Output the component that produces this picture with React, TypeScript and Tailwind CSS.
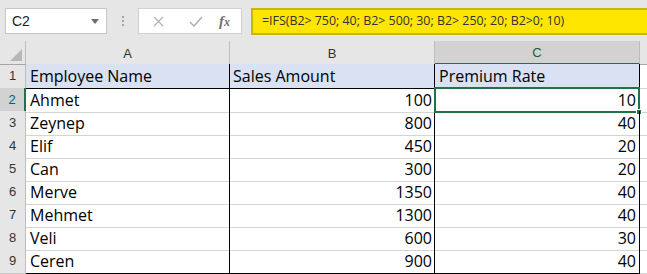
import React from 'react';

const rows: [string, number, number][] = [
    ['Ahmet', 100, 10],
    ['Zeynep', 800, 40],
    ['Elif', 450, 20],
    ['Can', 300, 20],
    ['Merve', 1350, 40],
    ['Mehmet', 1300, 40],
    ['Veli', 600, 30],
    ['Ceren', 900, 40],
];

const cellFont = { fontFamily: '"Open Sans", "Liberation Sans", sans-serif' };

const FormulaBar = () => (
    <div className="h-[41px] bg-[#e6e6e6] flex items-start pt-[8px] pl-[5px]">
        {/* Name box */}
        <div className="w-[102px] h-[26px] bg-white border border-[#c6c6c6] flex items-center justify-between pl-[6px] pr-[7px]">
            <span className="text-[14px] text-[#222]" style={{ fontFamily: '"Liberation Sans", sans-serif' }}>C2</span>
            <svg width="8" height="5" viewBox="0 0 8 5"><path d="M0 0h8L4 5z" fill="#6d6d6d" /></svg>
        </div>
        <div className="w-[31px] h-[26px] flex flex-col items-center justify-center gap-[2px]">
            <span className="w-[2px] h-[2px] bg-[#a6a6a6]"></span>
            <span className="w-[2px] h-[2px] bg-[#a6a6a6]"></span>
            <span className="w-[2px] h-[2px] bg-[#a6a6a6]"></span>
        </div>
        {/* Cancel / enter / function */}
        <div className="w-[104px] h-[26px] bg-white border border-[#d0d0d0] flex items-center">
            <svg className="ml-[14px]" width="11" height="11" viewBox="0 0 11 11">
                <path d="M1 1l9 9M10 1l-9 9" stroke="#b3b3b3" strokeWidth="1.3" />
            </svg>
            <svg className="ml-[25px]" width="14" height="11" viewBox="0 0 14 11">
                <path d="M1 6l4 4 8-9" stroke="#b3b3b3" strokeWidth="1.6" fill="none" />
            </svg>
            <span
                className="ml-[16px] text-[15px] italic text-[#707070] font-bold"
                style={{ fontFamily: '"Liberation Serif", serif' }}
            >
                f<span className="text-[12px]">x</span>
            </span>
        </div>
        {/* Formula input */}
        <div className="ml-[9px] flex-1 h-[27px] bg-[#ffe600] border-y-2 border-l-2 border-[#c9b800] flex items-center pl-[9px]">
            <span className="text-[12.4px] text-[#333]" style={{ fontFamily: '"Open Sans", sans-serif' }}>
                =IFS(B2&gt; 750; 40; B2&gt; 500; 30; B2&gt; 250; 20; B2&gt;0; 10)
            </span>
        </div>
    </div>
);

const grid = 'grid grid-cols-[26px_204px_205px_205px_1fr]';

const App = () => {
    return (
        <div className="w-[647px] h-[274px] bg-white overflow-hidden">
            <FormulaBar />

            {/* Column headers */}
            <div className={`${grid} h-[23px] bg-[#e6e6e6] text-[13px] text-[#333]`} style={{ fontFamily: '"Liberation Sans", sans-serif' }}>
                <div className="relative border-r border-[#bdbdbd] border-b border-b-[#a6a6a6]">
                    <svg className="absolute right-[3px] bottom-[3px]" width="12" height="12" viewBox="0 0 12 12">
                        <path d="M12 0v12H0z" fill="#b6b6b6" />
                    </svg>
                </div>
                <div className="border-r border-[#bdbdbd] border-b border-b-[#a6a6a6] flex items-center justify-center pt-[2px]">A</div>
                <div className="border-r border-[#bdbdbd] border-b border-b-[#a6a6a6] flex items-center justify-center pt-[2px]">B</div>
                <div className="bg-[#d2d2d2] border-r border-[#bdbdbd] border-b-2 border-b-[#217346] flex items-center justify-center text-[#1e5c3a] pt-[2px]">C</div>
                <div className="border-b border-b-[#a6a6a6]"></div>
            </div>

            {/* Header row */}
            <div className={`${grid} h-[24px] text-[16px] text-black`} style={cellFont}>
                <div className="bg-[#e6e6e6] border-r border-[#bdbdbd] border-b border-b-[#c8c8c8] flex items-center justify-center text-[13px] text-[#333]" style={{ fontFamily: '"Liberation Sans", sans-serif' }}>1</div>
                <div className="bg-[#d9e1f2] border-r border-black border-b border-b-black flex items-center pl-[4px]">Employee Name</div>
                <div className="bg-[#d9e1f2] border-r border-black border-b border-b-black flex items-center pl-[3px]">Sales Amount</div>
                <div className="bg-[#d9e1f2] border-r border-black border-b border-b-black flex items-center pl-[4px]">Premium Rate</div>
                <div className="border-b border-[#d4d4d4]"></div>
            </div>

            {/* Data rows */}
            {rows.map(([name, sales, rate], i) => {
                const selected = i === 0;
                const last = i === rows.length - 1;
                const bottom = last ? 'border-b-black' : 'border-b-[#d4d4d4]';
                return (
                    <div key={name} className={`${grid} h-[23px] text-[16px] text-black`} style={cellFont}>
                        <div
                            className={`flex items-center justify-center text-[13px] border-b border-b-[#c8c8c8] ${
                                selected
                                    ? 'bg-[#d2d2d2] text-[#1e5c3a] border-r-2 border-r-[#217346]'
                                    : 'bg-[#e6e6e6] text-[#333] border-r border-r-[#bdbdbd]'
                            }`}
                            style={{ fontFamily: '"Liberation Sans", sans-serif' }}
                        >
                            {i + 2}
                        </div>
                        <div className={`border-r border-r-black border-b ${bottom} flex items-center pl-[4px]`}>{name}</div>
                        <div className={`border-r border-r-black border-b ${bottom} flex items-center justify-end pr-[2px]`}>{sales}</div>
                        <div className={`relative border-r border-r-black border-b ${bottom} flex items-center justify-end pr-[3px]`}>
                            {rate}
                            {selected && (
                                <div className="absolute -left-[1px] -top-[1px] -right-[1px] -bottom-[1px] border-2 border-[#217346]">
                                    <div className="absolute -right-[4px] -bottom-[4px] w-[6px] h-[6px] bg-[#217346] border border-white"></div>
                                </div>
                            )}
                        </div>
                        <div className="border-b border-[#d4d4d4]"></div>
                    </div>
                );
            })}
        </div>
    );
};

export default App;
